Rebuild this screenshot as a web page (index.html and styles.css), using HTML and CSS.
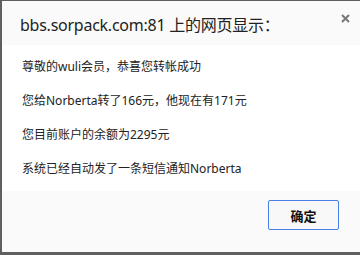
FILE: index.html
```html
<!DOCTYPE html>
<html lang="zh-CN">
<head>
    <meta charset="UTF-8">
    <meta name="viewport" content="width=device-width, initial-scale=1.0">
    <title>alert</title>
    <link rel="stylesheet" href="styles.css">
</head>
<body>
    <div class="dialog">
        <!-- Title bar -->
        <div class="dialog-header">
            <div class="dialog-title">bbs.sorpack.com:81 上的网页显示：</div>
            <div class="close">
                <svg width="9" height="9" viewBox="0 0 9 9">
                    <path d="M1 1 L8 8 M8 1 L1 8" stroke="#777" stroke-width="2" fill="none"/>
                </svg>
            </div>
        </div>

        <!-- Message -->
        <div class="dialog-body">
            <div class="line">尊敬的wuli会员，恭喜您转帐成功</div>
            <div class="line">您给Norberta转了166元，他现在有171元</div>
            <div class="line">您目前账户的余额为2295元</div>
            <div class="line">系统已经自动发了一条短信通知Norberta</div>
        </div>

        <!-- Buttons -->
        <div class="dialog-footer">
            <button class="btn-ok">确定</button>
        </div>
    </div>
</body>
</html>
```

FILE: styles.css
```css
body {
    margin: 0;
    padding: 0;
    background-color: #5f5f5f;
    font-family: "Noto Sans", "Noto Sans CJK SC", sans-serif;
    color: #222;
}

.dialog {
    margin: 1px 0 3px 2px;
    height: 251px;
    display: flex;
    flex-direction: column;
    background-color: #fff;
}

.dialog-header {
    height: 44px;
    background-color: #fafafa;
    display: flex;
    align-items: flex-start;
    justify-content: space-between;
    padding: 0 10px 0 18px;
}

.dialog-title {
    font-size: 16px;
    line-height: 22px;
    margin-top: 13px;
    letter-spacing: -0.25px;
}

.close {
    margin-top: 13px;
    width: 9px;
    height: 9px;
    display: flex;
}

.dialog-body {
    flex: 1;
    padding: 5px 20px 0;
    font-size: 12px;
}

.line {
    line-height: 34px;
}

.dialog-footer {
    height: 61px;
    background-color: #fafafa;
    display: flex;
    justify-content: flex-end;
    align-items: flex-start;
    padding: 0 21px 0 0;
}

.btn-ok {
    margin-top: 9px;
    width: 71px;
    height: 30px;
    background-color: #f8f8f8;
    border: 1px solid #4a7fe6;
    border-radius: 2px;
    font-family: "Noto Sans CJK SC", sans-serif;
    font-size: 13px;
    font-weight: 600;
    color: #111;
    padding: 0;
}
```
